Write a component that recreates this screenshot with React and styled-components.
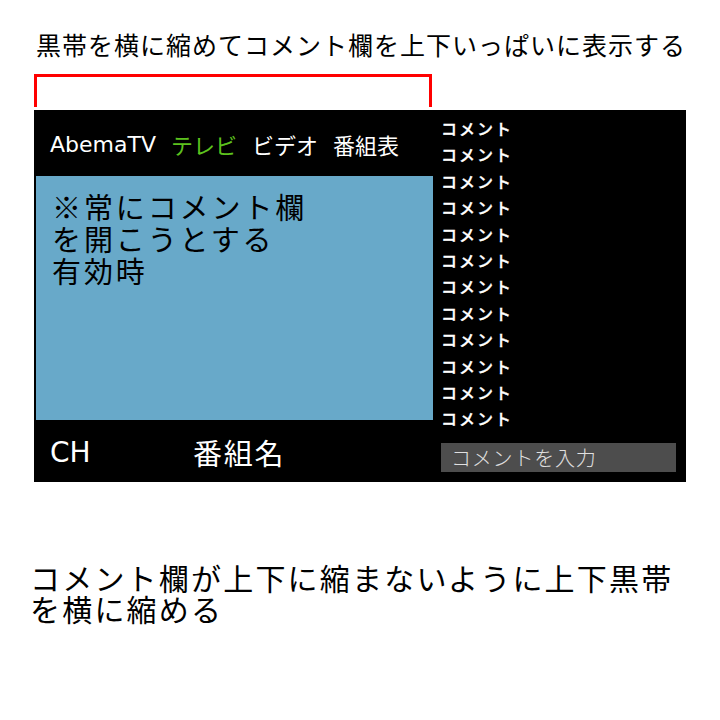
import React from "react";
import styled, { createGlobalStyle } from "styled-components";

const GlobalStyle = createGlobalStyle`
  body {
    margin: 0;
    background: #fff;
    font-family: "Noto Sans CJK JP", "DejaVu Sans", sans-serif;
  }
`;

const Page = styled.div`
  width: 720px;
  height: 720px;
  padding: 29px 34px 0;
  box-sizing: border-box;
`;

const Heading = styled.div`
  margin-left: 2px;
  font-size: 25px;
  letter-spacing: 1px;
  line-height: 30px;
  color: #000;
  white-space: nowrap;
`;

const Bracket = styled.div`
  width: 398px;
  height: 33px;
  margin-top: 15px;
  margin-bottom: 3px;
  box-sizing: border-box;
  border: 3px solid #ff0000;
  border-bottom: none;
`;

const Screen = styled.div`
  display: flex;
  width: 652px;
  height: 372px;
  background: #000;
`;

const PlayerColumn = styled.div`
  display: flex;
  flex-direction: column;
  width: 399px;
`;

const TopBar = styled.div`
  display: flex;
  align-items: center;
  gap: 15px;
  height: 66px;
  padding-left: 16px;
  padding-top: 2px;
  box-sizing: border-box;
  font-family: "DejaVu Sans", "Noto Sans CJK JP", sans-serif;
  font-size: 22px;
  color: #fff;
`;

const NavItem = styled.span`
  color: ${(p) => (p.$active ? "#5dc21e" : "#fff")};
`;

const Video = styled.div`
  flex: 1;
  margin-left: 2px;
  padding: 14px 0 0 16px;
  background: #68a9c9;
  font-size: 29px;
  letter-spacing: 2.9px;
  line-height: 32px;
  color: #000;
`;

const BottomBar = styled.div`
  display: flex;
  align-items: center;
  height: 62px;
  padding-left: 16px;
  padding-top: 2px;
  box-sizing: border-box;
  color: #fff;
`;

const Channel = styled.span`
  width: 143px;
  font-family: "DejaVu Sans", sans-serif;
  font-size: 28px;
`;

const ProgramName = styled.span`
  font-size: 29px;
  letter-spacing: 1.8px;
`;

const CommentColumn = styled.div`
  display: flex;
  flex-direction: column;
  flex: 1;
  padding: 5px 10px 10px 8px;
`;

const CommentList = styled.div`
  flex: 1;
`;

const Comment = styled.div`
  height: 26.4px;
  line-height: 26.4px;
  font-size: 16px;
  font-weight: 500;
  letter-spacing: 2px;
  color: #fff;
  -webkit-text-stroke: 0.3px #fff;
`;

const CommentInput = styled.input`
  width: 235px;
  height: 29px;
  padding: 0 0 0 10px;
  box-sizing: border-box;
  border: none;
  outline: none;
  background: #4d4d4d;
  font-family: "Noto Sans CJK JP", sans-serif;
  font-size: 20px;
  font-weight: 300;
  letter-spacing: 0.8px;
  color: #ddd;

  &::placeholder {
    color: #e0e0e0;
  }
`;

const Note = styled.div`
  margin: 80px 0 0 -4px;
  font-size: 30px;
  letter-spacing: 2.2px;
  line-height: 31px;
  color: #000;
  white-space: nowrap;
`;

const comments = Array.from({ length: 12 }, () => "コメント");

function App() {
  return (
    <>
      <GlobalStyle />
      <Page>
        <Heading>黒帯を横に縮めてコメント欄を上下いっぱいに表示する</Heading>
        <Bracket />
        <Screen>
          <PlayerColumn>
            <TopBar>
              <NavItem>AbemaTV</NavItem>
              <NavItem $active>テレビ</NavItem>
              <NavItem>ビデオ</NavItem>
              <NavItem>番組表</NavItem>
            </TopBar>
            <Video>
              ※常にコメント欄
              <br />
              を開こうとする
              <br />
              有効時
            </Video>
            <BottomBar>
              <Channel>CH</Channel>
              <ProgramName>番組名</ProgramName>
            </BottomBar>
          </PlayerColumn>
          <CommentColumn>
            <CommentList>
              {comments.map((c, i) => (
                <Comment key={i}>{c}</Comment>
              ))}
            </CommentList>
            <CommentInput placeholder="コメントを入力" />
          </CommentColumn>
        </Screen>
        <Note>
          コメント欄が上下に縮まないように上下黒帯
          <br />
          を横に縮める
        </Note>
      </Page>
    </>
  );
}

export default App;
